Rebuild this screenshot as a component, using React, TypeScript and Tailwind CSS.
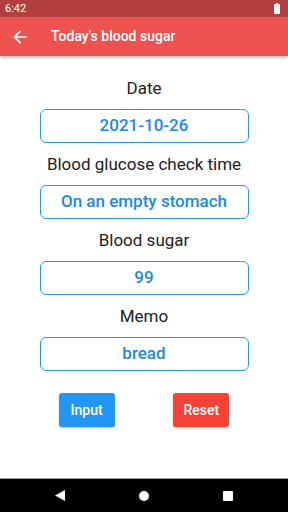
import React from 'react';

const fields = [
  { label: 'Date', value: '2021-10-26' },
  { label: 'Blood glucose check time', value: 'On an empty stomach' },
  { label: 'Blood sugar', value: '99' },
  { label: 'Memo', value: 'bread' },
];

export default function App() {
  return (
    <div
      className="w-[288px] h-[512px] flex flex-col bg-white overflow-hidden"
      style={{ fontFamily: 'Roboto, "Noto Sans", sans-serif' }}
    >
      {/* status bar */}
      <div className="h-[17px] bg-[#b23f3f] flex items-center justify-between pl-[5px] pr-[8px]">
        <span className="text-white text-[11px] leading-none">6:42</span>
        <div className="relative w-[6px] h-[10px] bg-white rounded-[1px] mt-[1px]">
          <div className="absolute -top-[1px] left-[2px] w-[2px] h-[1px] bg-white" />
        </div>
      </div>

      {/* app bar */}
      <div className="h-[39px] bg-[#ef5350] flex items-center shadow-[0_2px_3px_rgba(0,0,0,0.25)] relative z-10">
        <div className="w-[51px] pl-[10px] flex items-center">
          <svg width="20" height="20" viewBox="0 0 24 24" fill="white">
            <path d="M20 11H7.83l5.59-5.59L12 4l-8 8 8 8 1.41-1.41L7.83 13H20v-2z" />
          </svg>
        </div>
        <span className="text-white text-[14px] font-medium">Today's blood sugar</span>
      </div>

      {/* content */}
      <main className="flex-1 flex flex-col pt-[21px]">
        <div className="flex flex-col items-center gap-[10px]">
          {fields.map((f) => (
            <React.Fragment key={f.label}>
              <div className="text-[17px] leading-[22px] text-[#212121]">{f.label}</div>
              <div className="w-[209px] h-[34px] border border-[#2196f3] rounded-[6px] flex items-center justify-center">
                <span className="text-[17px] font-medium text-[#1e88e5]">{f.value}</span>
              </div>
            </React.Fragment>
          ))}
        </div>

        <div className="flex justify-evenly mt-[22px]">
          <button className="w-[56px] h-[34px] bg-[#2196f3] text-white text-[14px] font-medium rounded-[3px] shadow-[0_1px_2px_rgba(0,0,0,0.25)]">
            Input
          </button>
          <button className="w-[56px] h-[34px] bg-[#f44336] text-white text-[14px] font-medium rounded-[3px] shadow-[0_1px_2px_rgba(0,0,0,0.25)]">
            Reset
          </button>
        </div>
      </main>

      {/* nav bar */}
      <div className="h-[34px] bg-black flex items-center justify-between px-[55px] border-t border-[#9e9e9e]">
        <svg width="10" height="11" viewBox="0 0 10 11" fill="white">
          <polygon points="10,0 10,11 0,5.5" />
        </svg>
        <div className="w-[10px] h-[10px] rounded-full bg-white" />
        <div className="w-[10px] h-[10px] rounded-[1px] bg-white" />
      </div>
    </div>
  );
}
